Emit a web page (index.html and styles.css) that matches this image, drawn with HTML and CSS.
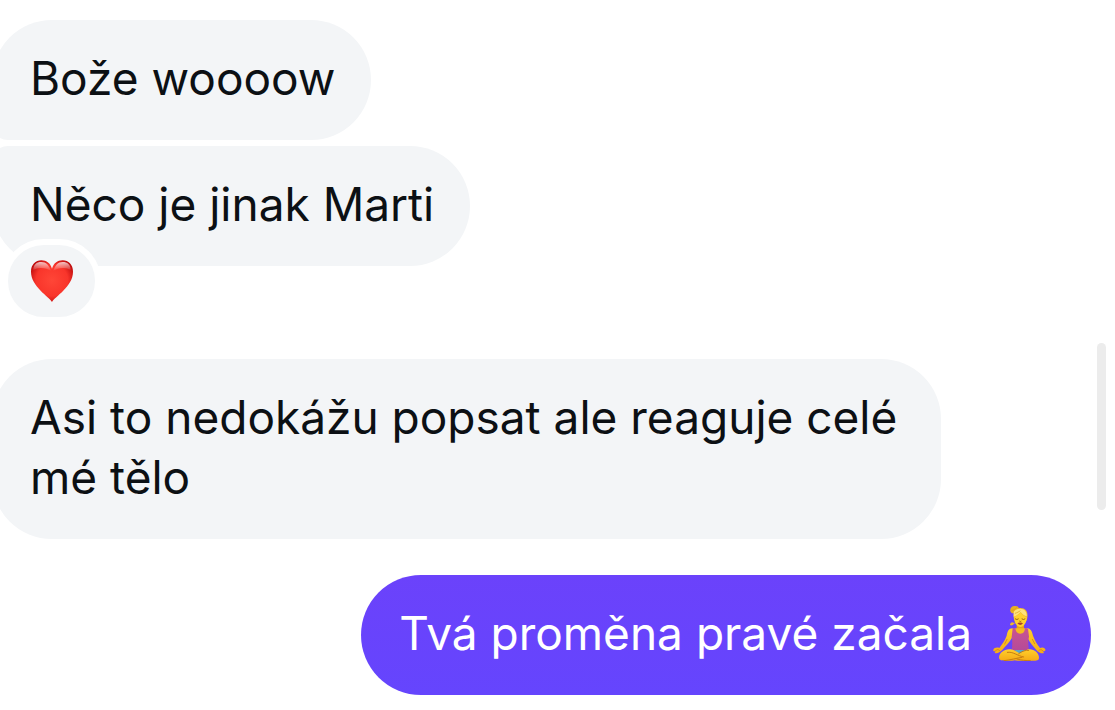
FILE: index.html
```html
<!DOCTYPE html>
<html lang="cs">
<head>
  <meta charset="UTF-8" />
  <meta name="viewport" content="width=device-width, initial-scale=1" />
  <title>Chat</title>
  <link rel="stylesheet" href="styles.css">
</head>
<body>

  <main class="thread">
    <p class="bubble received first">Bože woooow</p>

    <div class="message">
      <p class="bubble received last">Něco je jinak Marti</p>
      <button class="reaction" type="button" aria-label="❤️">
        <svg class="heart" viewBox="91 104 126 126" aria-hidden="true">
          <defs>
            <radialGradient id="heartFill" cx="0.5" cy="0.48" r="0.58">
              <stop offset="0" stop-color="#ff4637" />
              <stop offset="0.65" stop-color="#f9352b" />
              <stop offset="1" stop-color="#bd0a0c" />
            </radialGradient>
            <linearGradient id="heartShine" x1="0" y1="0" x2="0" y2="1">
              <stop offset="0" stop-color="#fff" stop-opacity="0.75" />
              <stop offset="1" stop-color="#fff" stop-opacity="0" />
            </linearGradient>
          </defs>
          <path fill="url(#heartFill)" d="M154 230C146 214 91 184 91 139C91 118 105 105 122 105C138 105 149 114 154 130C159 114 170 105 186 105C203 105 217 118 217 139C217 184 162 214 154 230Z" />
          <path fill="url(#heartShine)" d="M98 134C98 118 108 110 122 110C136 110 146 120 151 137C136 126 112 125 98 134Z" />
          <path fill="url(#heartShine)" d="M158 137C163 120 172 110 186 110C200 110 210 118 210 134C196 125 172 126 158 137Z" />
        </svg>
      </button>
    </div>

    <p class="bubble received">Asi to nedokážu popsat ale reaguje celé mé tělo</p>

    <p class="bubble sent">Tvá proměna pravé začala
      <svg class="yoga" viewBox="36 42 162 168" role="img" aria-label="🧘‍♀️">
        <defs>
          <linearGradient id="skin" x1="0" y1="0" x2="0" y2="1">
            <stop offset="0" stop-color="#ffd02c" />
            <stop offset="1" stop-color="#f5aa16" />
          </linearGradient>
          <linearGradient id="shirt" x1="0" y1="0" x2="0" y2="1">
            <stop offset="0" stop-color="#c95490" />
            <stop offset="1" stop-color="#b54a99" />
          </linearGradient>
        </defs>
        <!-- bun and hair -->
        <path fill="#e9ae22" d="M91 61C89 50 97 43 106 45C113 45 117 48 116 54L103 65C98 69 94 67 91 61Z" />
        <path fill="#f0b82c" d="M96 94C87 99 88 106 99 102L105 94C96 70 101 54 120 51C137 50 145 63 142 79C141 92 135 94 131 98L103 96Z" />
        <!-- neck and face -->
        <path fill="#e8a318" d="M110 96H132V119H110Z" />
        <path fill="#ffd02e" d="M103 77C109 75 117 69 122 65C128 72 134 76 140 78C140 96 132 107 121 108C110 107 103 95 103 77Z" />
        <path fill="#ffe37a" d="M101 63C106 54 119 51 129 55C137 59 141 67 140 76C131 73 126 68 122 63C117 69 110 74 101 77Z" />
        <path fill="none" stroke="#d99b17" stroke-width="2" d="M94 58C100 59 105 54 111 49M105 67C112 65 117 62 121 59" />
        <path fill="none" stroke="#9a6310" stroke-width="3" stroke-linecap="round" d="M106 84Q111 88 115 84M126 84Q131 88 135 84M119 91Q121 93 123 91" />
        <path fill="#a8452b" d="M112 97Q118 93 120 95Q123 93 129 97Q121 107 112 97Z" />
        <!-- arms -->
        <path fill="url(#skin)" d="M97 112C86 112 83 121 80 134C74 150 66 160 58 171C50 168 42 171 40 176C39 181 43 182 47 179L44 185C49 190 60 184 66 178C77 165 90 153 95 142L103 114Z" />
        <path fill="url(#skin)" d="M143 112C152 113 156 122 159 134C165 150 171 159 180 171C187 167 194 170 196 175C197 181 193 182 188 179L192 185C188 190 176 184 171 179C160 166 149 154 144 143L136 114Z" />
        <!-- top -->
        <path fill="#f6ba20" d="M102 112H138L134 132H105Z" />
        <path fill="url(#shirt)" d="M98 112L106 111C107 123 113 128 121 128C130 128 134 123 135 111L144 113L147 137C143 151 145 164 147 179H95C97 164 98 149 95 138Z" />
        <!-- crossed legs -->
        <path fill="#57a5cf" d="M105 177H139L134 190H111Z" />
        <path fill="url(#skin)" d="M145 175C160 172 177 185 177 200C177 210 166 209 154 209H117C103 210 89 207 87 202C103 203 126 180 145 175Z" />
        <path fill="url(#skin)" d="M92 175C75 172 58 184 57 199C57 209 66 209 79 209H96C112 206 126 200 141 197C126 196 114 180 92 175Z" />
        <path fill="none" stroke="#c77d12" stroke-width="3" stroke-linecap="round" d="M82 184C99 181 111 194 131 198M116 188C127 180 137 177 146 178M72 209C92 207 111 201 126 199M111 204C125 208 137 209 151 209" />
        <path fill="none" stroke="#c77d12" stroke-width="2" stroke-linecap="round" d="M47 179C50 174 55 175 59 179M188 179C185 174 180 175 176 179M81 145L74 159M157 145L164 158" />
      </svg>
    </p>
  </main>

  <div class="scroll-thumb"></div>

</body>
</html>
```

FILE: styles.css
```css
* { margin:0; padding:0; box-sizing:border-box; }
body { background:#fff; color:#0c1014; font-family:Inter, "Noto Sans", sans-serif; font-size:46px; line-height:60px; overflow:hidden; }

.thread { display:flex; flex-direction:column; align-items:flex-start; padding:20px 24px 16px 0; margin-left:-8px; }
.bubble { padding:28px 36px 32px 38px; border-radius:60px; }
.received { background:#f3f5f7; margin-right:150px; }
.first { border-bottom-left-radius:16px; }
.last { border-top-left-radius:16px; }
.sent { display:flex; align-items:center; gap:20px; align-self:flex-end; margin-top:36px; padding-right:45px; background:linear-gradient(#6b42fb, #6545fd); color:#fff; }
.yoga { width:54px; height:56px; flex:none; }

/* the reaction hangs over the lower edge of its bubble */
.message { position:relative; margin:6px 0 93px; }
.reaction { position:absolute; left:10px; bottom:-57px; display:flex; align-items:center; justify-content:center; width:99px; height:84px; border:6px solid #fff; border-radius:42px; background:#f3f5f7; cursor:pointer; }
.heart { width:42px; height:42px; }

.scroll-thumb { position:fixed; top:343px; right:9px; width:9px; height:167px; border-radius:5px; background:#ececec; }
```
